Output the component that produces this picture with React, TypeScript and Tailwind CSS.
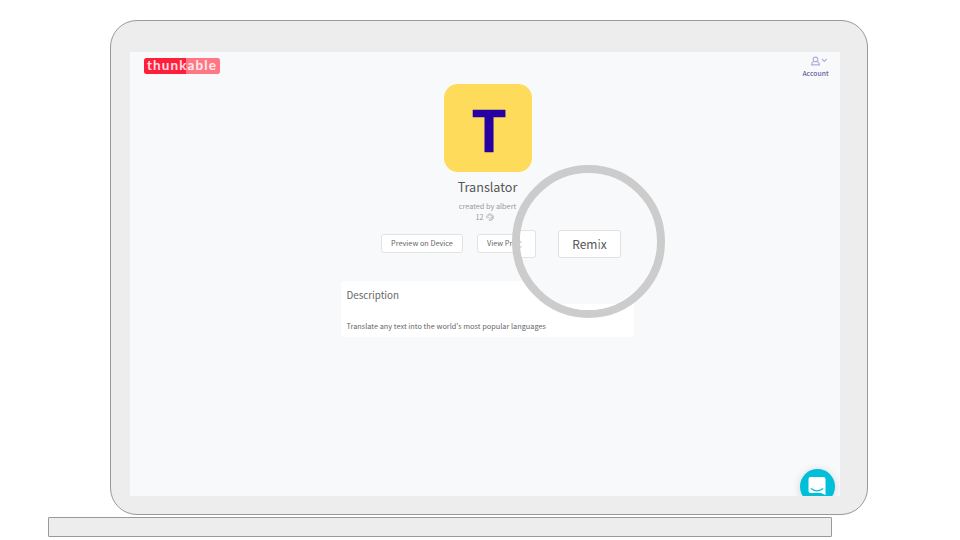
import React from "react";

function Logo() {
  return (
    <div className="flex h-4 w-[76px] items-center justify-center rounded-[2.5px] bg-[linear-gradient(to_right,#ff1f3d_55%,#ff7684_55%)] font-['Lato','Liberation_Sans',sans-serif] text-[13.5px] font-bold leading-none tracking-[1.1px] text-white/85">
      <span className="pl-px">thunkable</span>
    </div>
  );
}

function Account() {
  return (
    <div className="flex w-[30px] flex-col items-center text-[#6a62a5]">
      <svg className="ml-[6px] h-[10px] w-[18px]" viewBox="0 0 18 10" fill="none" stroke="#b0addf" strokeWidth="1.1">
        <circle cx="5.5" cy="3.4" r="2.3" />
        <path d="M4 5.3 C2 6 1.6 7 1.5 8.9 H9.5 C9.4 7 9 6 7 5.3" />
        <path d="M12 3 L14.3 5.4 L16.6 3" />
      </svg>
      <span className="mt-[2px] text-[6.8px] font-medium leading-[11px]">Account</span>
    </div>
  );
}

function AppIcon() {
  return (
    <div className="flex h-[88px] w-[88px] items-center justify-center rounded-[14px] bg-[#ffdb5c]">
      <span className="-mt-[2px] pl-[3px] text-[57px] font-bold leading-[88px] text-[#2700a3] [-webkit-text-stroke:0.4px_#2700a3]">T</span>
    </div>
  );
}

function Magnifier() {
  return (
    <div className="absolute left-[512px] top-[165px] h-[153px] w-[153px] overflow-hidden rounded-full border-8 border-[#cccccc] bg-[#f8f9fb]">
      <div className="flex h-full flex-col">
        <div className="mt-[57px] flex h-7 shrink-0 gap-[22px]">
          <div className="flex w-4 items-center rounded-r-[3px] border border-l-0 border-[#e3e3e4] bg-white">
            <svg className="h-[7px] w-[2px]" viewBox="0 0 2 7">
              <path d="M0 1 H1.5 M0 6 H1.5" stroke="#aaa" strokeWidth="1" />
            </svg>
          </div>
          <div className="flex w-[63px] items-center justify-center rounded-[3px] border border-[#e1e1e2] bg-white text-[12px] leading-none text-[#555]">
            <span>Rem<span className="text-[#77806d]">i</span>x</span>
          </div>
        </div>
        <div className="mt-[46px] h-10 shrink-0 bg-white" />
      </div>
    </div>
  );
}

export default function App() {
  return (
    <div className="relative h-[540px] w-[960px] overflow-hidden bg-white font-['Noto_Sans_CJK_SC','Noto_Sans',sans-serif]">
      <div className="flex flex-col pl-12 pt-5">
        <div className="ml-[62px] h-[495px] w-[758px] rounded-[27px] border border-[#999] bg-[#ededed] pl-[19px] pt-[31px]">
          <div className="flex h-[444px] w-[710px] flex-col overflow-hidden bg-[#f8f9fb]">
            <header className="flex h-8 shrink-0 justify-between pl-[13.5px] pr-[9.5px]">
              <div className="pt-[6px]"><Logo /></div>
              <div className="pt-[3.5px]"><Account /></div>
            </header>
            <main className="flex h-[385px] shrink-0 flex-col items-center pl-[5px]">
              <div><AppIcon /></div>
              <h1 className="mt-[5px] text-[12.6px] leading-[20px] text-[#555]">Translator</h1>
              <p className="mt-[4px] text-[7.3px] leading-[11px] text-[#999]">created by albert</p>
              <p className="mr-[6px] flex items-center gap-[2px] text-[7.3px] leading-[10px] text-[#999]">
                12
                <svg className="h-2 w-2" viewBox="0 0 8 8" fill="none" stroke="#aaa" strokeWidth=".7">
                  <path d="M1 5.5 A3.2 3.2 0 1 1 3.5 7.2 M7 2.5 A3.2 3.2 0 0 1 2.5 6.8 M2.3 5 A2 2 0 1 1 5.4 5.2 L3 5.2" />
                </svg>
              </p>
              <div className="mr-[55px] mt-[12px] flex gap-[14px] text-[7.3px] leading-none text-[#666]">
                <div className="flex h-[19px] w-[82px] items-center justify-center rounded-[3px] border border-[#e3e3e4] bg-white">Preview on Device</div>
                <div className="flex h-[19px] w-[62px] items-center rounded-[3px] border border-[#e3e3e4] bg-white pl-[9px]">View Project</div>
              </div>
              <section className="mt-[28px] h-14 w-[293px] rounded-[3px] bg-white pl-[5.5px] pt-[6px] text-[#666]">
                <h2 className="text-[9.8px] leading-[16px]">Description</h2>
                <p className="mt-[17px] text-[7.35px] leading-[11px]">Translate any text into the world's most popular languages</p>
              </section>
            </main>
            <footer className="-mt-[0.5px] flex shrink-0 justify-end pr-[5.5px]">
              <div className="flex h-[35px] w-[35px] justify-center rounded-full bg-[#00bfd8] pt-[8px] shadow-[0_1px_8px_rgba(0,0,0,0.15)]">
                <svg className="h-[18px] w-[18px]" viewBox="0 0 18 18">
                  <path d="M2.5 0 H15.5 Q17.5 0 17.5 2 V18 L13 16 H2.5 Q.5 16 .5 14 V2 Q.5 0 2.5 0 Z" fill="white" />
                  <path d="M3.3 11.7 Q9 15.9 14.7 11.7" fill="none" stroke="#00bfd8" strokeWidth="1.2" strokeLinecap="round" />
                </svg>
              </div>
            </footer>
          </div>
        </div>
        <div className="mt-[2px] h-5 w-[784px] rounded-[1px] border border-[#999] bg-[#ededed]" />
      </div>
      <Magnifier />
    </div>
  );
}
